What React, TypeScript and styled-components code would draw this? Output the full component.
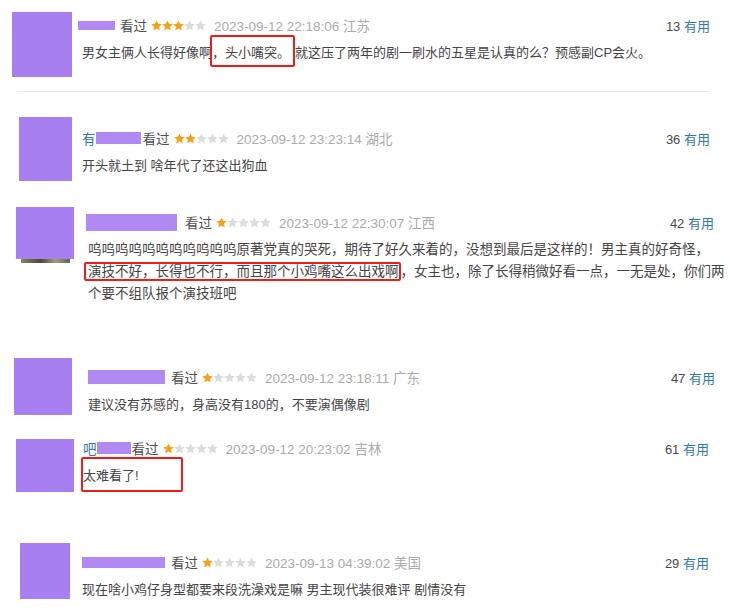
import React from 'react';
import styled, { createGlobalStyle } from 'styled-components';

const GlobalStyle = createGlobalStyle`
  body {
    margin: 0;
    background: #fff;
    font-family: "Liberation Sans", "Noto Sans CJK SC", sans-serif;
  }
`;

// một khối bình luận (mỗi khối là một ảnh chụp, lệch nhau một chút)
const Block = styled.div<{ $h: number; $top: number; $left: number; $right: number }>`
  height: ${(p) => p.$h}px;
  box-sizing: border-box;
  padding: ${(p) => p.$top}px ${(p) => 732 - p.$right}px 0 ${(p) => p.$left}px;
  overflow: hidden;
`;

const Row = styled.div<{ $gap: number }>`
  display: flex;
  align-items: flex-start;
  gap: ${(p) => p.$gap}px;
`;

const AvatarCol = styled.div`
  display: flex;
  flex-direction: column;
  align-items: center;
  flex-shrink: 0;
`;

const Avatar = styled.div<{ $w: number; $h: number }>`
  width: ${(p) => p.$w}px;
  height: ${(p) => p.$h}px;
  background: #a87ff0;
`;

const Peek = styled.div<{ $w: number }>`
  width: ${(p) => p.$w}px;
  height: 4px;
  background: linear-gradient(90deg, #7d8a5a, #4b4a3c 40%, #9aa07a 70%, #5e6b48);
`;

const Body = styled.div<{ $off: number }>`
  flex: 1;
  padding-top: ${(p) => p.$off}px;
  min-width: 0;
`;

const Header = styled.div`
  display: flex;
  align-items: center;
  height: 18px;
  font-size: 13.5px;
  white-space: nowrap;
`;

const Name = styled.span<{ $gap: number }>`
  display: flex;
  align-items: center;
  margin-right: ${(p) => p.$gap}px;
  color: #3377aa;
`;

const NameMask = styled.span<{ $w: number; $h: number }>`
  display: inline-block;
  width: ${(p) => p.$w}px;
  height: ${(p) => p.$h}px;
  background: #b08af2;
`;

const Seen = styled.span`
  color: #4f4f4f;
  margin-right: 4px;
`;

const Stars = styled.span`
  display: inline-flex;
  margin-right: 8px;
`;

const DateText = styled.span`
  color: #aaa;
`;

const Useful = styled.span`
  margin-left: auto;
  color: #494949;
  font-size: 13px;
`;

const UsefulLink = styled.span`
  color: #3377aa;
`;

const Content = styled.div<{ $size: number; $indent: number }>`
  margin-top: 8px;
  padding-left: ${(p) => p.$indent}px;
  font-size: ${(p) => p.$size}px;
  line-height: 22px;
  color: #444;
`;

const Line = styled.div`
  white-space: nowrap;
`;

// khung đỏ đánh dấu
const Mark = styled.span<{ $pad: string; $ml: number }>`
  border: 2px solid #ee1c1c;
  border-radius: 2px;
  padding: ${(p) => p.$pad};
  margin-left: ${(p) => p.$ml}px;
`;

const Divider = styled.div`
  margin: 14px 0 0 5px;
  border-top: 1px solid #ececec;
`;

const Star: React.FC<{ on: boolean }> = ({ on }) => (
  <svg width="11" height="11" viewBox="1 1.2 22 21">
    <path
      d="M12 1.5l3.2 6.8 7.3.9-5.4 5 1.4 7.3L12 17.9l-6.5 3.6 1.4-7.3-5.4-5 7.3-.9z"
      fill={on ? '#f7a11a' : '#dcdcdc'}
    />
  </svg>
);

interface Review {
  h: number;
  top: number;
  left: number;
  right: number;
  avW: number;
  avH: number;
  peek?: number;
  gap: number;
  off: number;
  lead?: string;
  maskW: number;
  maskH: number;
  nameGap: number;
  stars: number;
  date: string;
  useful: number;
  size: number;
  indent: number;
  lines: React.ReactNode[];
  divider?: boolean;
}

const reviews: Review[] = [
  {
    h: 100, top: 12, left: 12, right: 710, avW: 60, avH: 65, gap: 6, off: 4,
    maskW: 37, maskH: 9, nameGap: 5, stars: 3, date: '2023-09-12 22:18:06 江苏', useful: 13,
    size: 13, indent: 4, divider: true,
    lines: [
      <>
        男女主俩人长得好像啊
        <Mark $pad="8px 3px 5px 0" $ml={-2}>，头小嘴突。</Mark>
        就这压了两年的剧一刷水的五星是认真的么？预感副CP会火。
      </>,
    ],
  },
  {
    h: 95, top: 17, left: 19, right: 710, avW: 53, avH: 64, gap: 10, off: 12,
    lead: '有', maskW: 45, maskH: 12, nameGap: 2, stars: 2, date: '2023-09-12 23:23:14 湖北', useful: 36,
    size: 13, indent: 0,
    lines: ['开头就土到 啥年代了还这出狗血'],
  },
  {
    h: 135, top: 12, left: 16, right: 714, avW: 58, avH: 52, peek: 49, gap: 12, off: 6,
    maskW: 91, maskH: 17, nameGap: 8, stars: 1, date: '2023-09-12 22:30:07 江西', useful: 42,
    size: 13.5, indent: 2,
    lines: [
      '呜呜呜呜呜呜呜呜呜呜呜原著党真的哭死，期待了好久来着的，没想到最后是这样的！男主真的好奇怪，',
      <>
        <Mark $pad="0 0 0 2px" $ml={-4}>演技不好，长得也不行，而且那个小鸡嘴这么出戏啊</Mark>
        ，女主也，除了长得稍微好看一点，一无是处，你们两
      </>,
      '个要不组队报个演技班吧',
    ],
  },
  {
    h: 95, top: 28, left: 14, right: 715, avW: 58, avH: 57, gap: 16, off: 10,
    maskW: 77, maskH: 14, nameGap: 6, stars: 1, date: '2023-09-12 23:18:11 广东', useful: 47,
    size: 13, indent: 0,
    lines: ['建议没有苏感的，身高没有180的，不要演偶像剧'],
  },
  {
    h: 95, top: 14, left: 16, right: 709, avW: 58, avH: 53, gap: 9, off: 0,
    lead: '吧', maskW: 34, maskH: 12, nameGap: 1, stars: 1, date: '2023-09-12 20:23:02 吉林', useful: 61,
    size: 13, indent: 0,
    lines: [<Mark $pad="9px 42px 7px 0" $ml={-2}>太难看了!</Mark>],
  },
  {
    h: 90, top: 23, left: 20, right: 709, avW: 50, avH: 56, gap: 12, off: 10,
    maskW: 83, maskH: 11, nameGap: 6, stars: 1, date: '2023-09-13 04:39:02 美国', useful: 29,
    size: 13, indent: 0,
    lines: ['现在啥小鸡仔身型都要来段洗澡戏是嘛 男主现代装很难评 剧情没有'],
  },
];

const ReviewBlock: React.FC<{ r: Review }> = ({ r }) => (
  <Block $h={r.h} $top={r.top} $left={r.left} $right={r.right}>
    <Row $gap={r.gap}>
      <AvatarCol>
        <Avatar $w={r.avW} $h={r.avH} />
        {r.peek && <Peek $w={r.peek} />}
      </AvatarCol>
      <Body $off={r.off}>
        <Header>
          <Name $gap={r.nameGap}>
            {r.lead}
            <NameMask $w={r.maskW} $h={r.maskH} />
          </Name>
          <Seen>看过</Seen>
          <Stars>
            {[0, 1, 2, 3, 4].map((i) => (
              <Star key={i} on={i < r.stars} />
            ))}
          </Stars>
          <DateText>{r.date}</DateText>
          <Useful>
            {r.useful} <UsefulLink>有用</UsefulLink>
          </Useful>
        </Header>
        <Content $size={r.size} $indent={r.indent}>
          {r.lines.map((l, i) => (
            <Line key={i}>{l}</Line>
          ))}
        </Content>
      </Body>
    </Row>
    {r.divider && <Divider />}
  </Block>
);

const App: React.FC = () => {
  return (
    <>
      <GlobalStyle />
      {reviews.map((r, i) => (
        <ReviewBlock key={i} r={r} />
      ))}
    </>
  );
};

export default App;
